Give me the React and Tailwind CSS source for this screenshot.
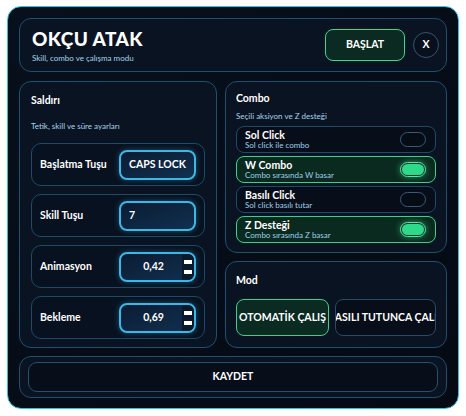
import React from "react";

const F = { fontFamily: 'Lato, "Open Sans", sans-serif' };

function InputRow({ label, value, spinner, center }) {
  return (
    <div className="h-[43px] rounded-[10px] border border-[#1d4a68] bg-[#08111f] flex items-center pl-2 pr-[8px]">
      <span className="text-[10.5px] font-bold text-white flex-1 whitespace-nowrap">{label}</span>
      <div className="w-[77px] h-[30px] shrink-0 rounded-[8px] border-2 border-[#3cb8e8] bg-gradient-to-br from-[#0b1c33] to-[#103050] shadow-[0_0_6px_rgba(56,189,248,0.35)] flex items-center overflow-hidden">
        {spinner ? (
          <>
            <span className="flex-1 text-center text-[10.5px] font-bold text-white pl-1">{value}</span>
            <div className="w-[12px] h-full bg-[#0a1a2c] flex flex-col items-center justify-center gap-[6px]">
              <div className="w-[8px] h-[4px] bg-white" />
              <div className="w-[8px] h-[4px] bg-white" />
            </div>
          </>
        ) : (
          <span className={`flex-1 text-[10.5px] font-bold text-white ${center ? "text-center" : "pl-[8px]"}`}>{value}</span>
        )}
      </div>
    </div>
  );
}

function ToggleRow({ title, sub, on }) {
  return (
    <div
      className={`h-[27px] rounded-[8px] border flex items-center pl-[8px] pr-[9px] ${
        on ? "border-[#3fcf8a] bg-[#0a2a1f]" : "border-[#1d4a68] bg-[#070e1a]"
      }`}
    >
      <div className="flex-1 flex flex-col">
        <span className="text-[10.5px] font-bold text-white leading-[11px]">{title}</span>
        <span className="text-[8px] text-[#9fd0ea] leading-[9px]">{sub}</span>
      </div>
      {on ? (
        <div className="w-[26px] h-[15px] rounded-full border border-[#5ee0a2] bg-[#0b3a28] p-[1px] shadow-[0_0_6px_rgba(60,220,140,0.6)]">
          <div className="w-full h-full rounded-full bg-[#2fd98a]" />
        </div>
      ) : (
        <div className="w-[26px] h-[15px] rounded-full border border-[#3a5a78] bg-[#060c16]" />
      )}
    </div>
  );
}

export default function App() {
  return (
    <div style={F} className="w-[466px] h-[416px] bg-white pt-[6px] pl-[7px]">
      <div className="w-[452px] h-[403px] rounded-[14px] border border-[#2ec4e6] bg-gradient-to-br from-[#07101c] to-[#050a13] p-[11px] flex flex-col">
        {/* header */}
        <div className="h-[54px] shrink-0 rounded-[12px] border border-[#1f5070] bg-[#0a1322] flex items-center pl-[12px] pr-[7px]">
          <div className="flex-1 flex flex-col">
            <span className="text-[19px] font-black text-white leading-[22px] tracking-[0.4px]">OKÇU ATAK</span>
            <span className="text-[8px] text-[#a6d4ea] leading-[10px] mt-[3px]">Skill, combo ve çalışma modu</span>
          </div>
          <button className="w-[80px] h-[32px] rounded-[8px] border-[1.5px] border-[#3fd68f] bg-[#0b2a22] text-[10.5px] font-bold text-white">
            BAŞLAT
          </button>
          <button className="ml-[8px] w-[26px] h-[26px] rounded-full border border-[#34566e] bg-[#07101c] text-[10.5px] font-bold text-white flex items-center justify-center">
            X
          </button>
        </div>

        <div className="flex gap-[8px] mt-[9px] h-[267px] shrink-0">
          {/* left */}
          <div className="w-[198px] shrink-0 h-full rounded-[12px] border border-[#1f5070] bg-[#0a1322] px-[11px] pt-[12px]">
            <div className="text-[10.5px] font-bold text-white leading-[13px]">Saldırı</div>
            <div className="text-[8px] text-[#a6d4ea] leading-[10px] mt-[14px]">Tetik, skill ve süre ayarları</div>
            <div className="flex flex-col gap-[8px] mt-[12px]">
              <InputRow label="Başlatma Tuşu" value="CAPS LOCK" center />
              <InputRow label="Skill Tuşu" value="7" />
              <InputRow label="Animasyon" value="0,42" spinner />
              <InputRow label="Bekleme" value="0,69" spinner />
            </div>
          </div>

          {/* right */}
          <div className="flex-1 min-w-0 flex flex-col gap-[8px]">
            <div className="h-[172px] shrink-0 rounded-[12px] border border-[#1f5070] bg-[#0a1322] px-[10px] pt-[10px]">
              <div className="text-[10.5px] font-bold text-white leading-[13px]">Combo</div>
              <div className="text-[8px] text-[#a6d4ea] leading-[10px] mt-[6px]">Seçili aksiyon ve Z desteği</div>
              <div className="flex flex-col gap-[3px] mt-[5px]">
                <ToggleRow title="Sol Click" sub="Sol click ile combo" />
                <ToggleRow title="W Combo" sub="Combo sırasında W basar" on />
                <ToggleRow title="Basılı Click" sub="Sol click basılı tutar" />
                <ToggleRow title="Z Desteği" sub="Combo sırasında Z basar" on />
              </div>
            </div>
            <div className="flex-1 rounded-[12px] border border-[#1f5070] bg-[#0a1322] px-[10px] pt-[12px]">
              <div className="text-[10.5px] font-bold text-white leading-[13px]">Mod</div>
              <div className="flex gap-[6px] mt-[12px]">
                <button className="w-[93px] shrink-0 h-[37px] rounded-[8px] border border-[#3fcf8a] bg-[#0b2a22] text-[10.5px] font-bold text-white flex items-center justify-center overflow-hidden whitespace-nowrap">
                  <span className="shrink-0">OTOMATİK ÇALIŞ</span>
                </button>
                <button className="flex-1 min-w-0 h-[37px] rounded-[8px] border border-[#2a4a66] bg-[#070e1a] text-[10.5px] font-bold text-white flex items-center justify-center overflow-hidden whitespace-nowrap">
                  <span className="shrink-0">BASILI TUTUNCA ÇALIŞ</span>
                </button>
              </div>
            </div>
          </div>
        </div>

        {/* bottom */}
        <div className="mt-[8px] h-[42px] shrink-0 rounded-[12px] border border-[#1f5070] bg-[#0a1322] px-[8px] py-[5px]">
          <button className="w-full h-full rounded-[9px] border border-[#24506e] bg-[#070e1a] text-[10.5px] font-bold text-white">
            KAYDET
          </button>
        </div>
      </div>
    </div>
  );
}
